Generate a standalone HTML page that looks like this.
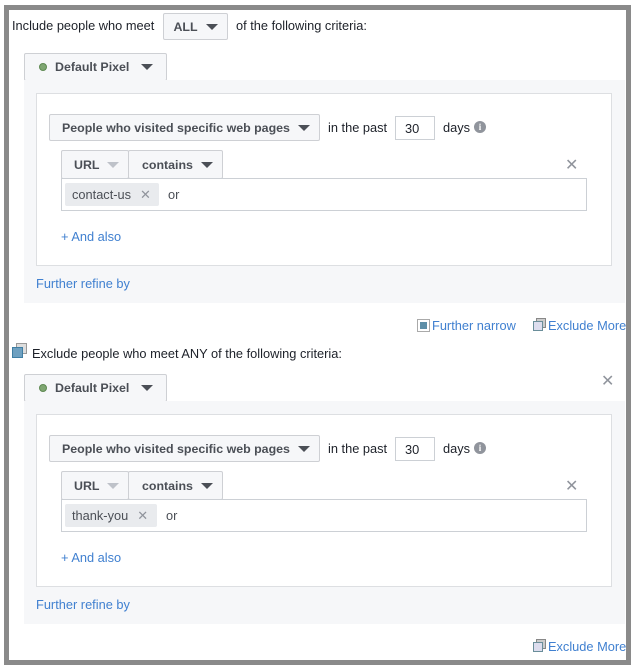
<!DOCTYPE html>
<html><head><meta charset="utf-8"><style>
*{box-sizing:border-box;margin:0;padding:0}
body{width:636px;height:670px;background:#fff;position:relative;overflow:hidden;font-family:"Liberation Sans",Arial,sans-serif;font-size:12.8px;color:#1d2129}
.a{position:absolute}
.frame{left:4px;top:5px;width:627px;height:660px;border:5px solid #8a8a8a;background:#fff}
.btn{position:absolute;background:#f6f7f9;border:1px solid #ced0d4;border-radius:2px;font-weight:bold;color:#4b4f56;display:flex;align-items:center;font-size:12.4px}
.tri{display:inline-block;width:0;height:0;border-left:6px solid transparent;border-right:6px solid transparent;border-top:6px solid #4b4f56;margin-left:8px}
.tri.l{border-top-color:#bec2c9}
.panel{position:absolute;left:24px;width:601px;height:223px;background:#f6f7f9}
.box{position:absolute;left:36px;width:576px;height:173px;background:#fff;border:1px solid #dddfe2}
.t{position:absolute;white-space:nowrap;line-height:14px}
.link{color:#4080d0}
.x{position:absolute;color:#90949c;font-size:16px;line-height:17px}
.in{position:absolute;background:#fff;border:1px solid #ccd0d5}
.tag{position:absolute;background:#e9ebee;border-radius:2px;color:#4b4f56;display:flex;align-items:center;padding-left:7px}
.dot{width:8px;height:8px;border-radius:50%;background:#7fa672;border:1px solid #5e8a52;display:inline-block;margin-right:8px}
.info{position:absolute;width:12px;height:12px;border-radius:50%;background:#90949c;color:#fff;font-size:9px;font-weight:bold;text-align:center;line-height:12px;font-family:"Liberation Serif",serif}
.ic{position:absolute;width:13px;height:13px}
</style></head><body>
<div class="a frame"></div>

<div class="t" style="left:12px;top:19px">Include people who meet</div>
<div class="btn" style="left:163px;top:13px;width:65px;height:27px;justify-content:center">ALL<span class="tri"></span></div>
<div class="t" style="left:236px;top:19px">of the following criteria:</div>

<!-- block 1 -->
<div class="btn" style="left:24px;top:53px;width:143px;height:28px;padding-left:14px"><span class="dot"></span>Default Pixel<span class="tri" style="margin-left:12px"></span></div>
<div class="panel" style="top:80px"></div>
<div class="box" style="top:93px"></div>
<div class="btn" style="left:49px;top:114px;width:271px;height:27px;padding-left:12px">People who visited specific web pages<span class="tri"></span></div>
<div class="t" style="left:328px;top:121px">in the past</div>
<div class="in" style="left:395px;top:116px;width:40px;height:24px;padding:4px 0 0 9px">30</div>
<div class="t" style="left:443px;top:121px">days</div>
<div class="info" style="left:474px;top:121px">i</div>
<div class="btn" style="left:61px;top:150px;width:68px;height:29px;padding-left:12px">URL<span class="tri l"></span></div>
<div class="btn" style="left:128px;top:150px;width:95px;height:29px;padding-left:13px">contains<span class="tri"></span></div>
<div class="x" style="left:565px;top:157px">✕</div>
<div class="in" style="left:61px;top:178px;width:526px;height:33px"></div>
<div class="tag" style="left:65px;top:183px;width:94px;height:23px">contact-us<span style="color:#90949c;margin-left:9px;font-size:13px">✕</span></div>
<div class="t" style="left:168px;top:188px;color:#4b4f56">or</div>
<div class="t link" style="left:61px;top:230px">+ And also</div>
<div class="t link" style="left:36px;top:277px">Further refine by</div>

<div class="ic" style="left:417px;top:319px;border:1px solid #aaa;background:#fff"><div class="a" style="left:2px;top:2px;width:7px;height:7px;background:#5e8fa8"></div></div>
<div class="t link" style="left:432px;top:319px">Further narrow</div>
<div class="ic" style="left:533px;top:318px"><div class="a" style="left:3px;top:0;width:10px;height:10px;border:1px solid #888;background:#ccc"></div><div class="a" style="left:0;top:3px;width:10px;height:10px;border:1px solid #6a8e9a;background:#dde"></div></div>
<div class="t link" style="left:548px;top:319px">Exclude More</div>

<div class="ic" style="left:12px;top:343px;width:15px;height:15px"><div class="a" style="left:4px;top:0;width:11px;height:11px;border:1px solid #999;background:#ddd"></div><div class="a" style="left:0;top:4px;width:11px;height:11px;border:1px solid #3f7ea3;background:#6ea0c0"></div></div>
<div class="t" style="left:32px;top:347px">Exclude people who meet ANY of the following criteria:</div>

<!-- block 2 -->
<div class="btn" style="left:24px;top:374px;width:143px;height:28px;padding-left:14px"><span class="dot"></span>Default Pixel<span class="tri" style="margin-left:12px"></span></div>
<div class="x" style="left:601px;top:373px">✕</div>
<div class="panel" style="top:401px"></div>
<div class="box" style="top:414px"></div>
<div class="btn" style="left:49px;top:435px;width:271px;height:27px;padding-left:12px">People who visited specific web pages<span class="tri"></span></div>
<div class="t" style="left:328px;top:442px">in the past</div>
<div class="in" style="left:395px;top:437px;width:40px;height:24px;padding:4px 0 0 9px">30</div>
<div class="t" style="left:443px;top:442px">days</div>
<div class="info" style="left:474px;top:442px">i</div>
<div class="btn" style="left:61px;top:471px;width:68px;height:29px;padding-left:12px">URL<span class="tri l"></span></div>
<div class="btn" style="left:128px;top:471px;width:95px;height:29px;padding-left:13px">contains<span class="tri"></span></div>
<div class="x" style="left:565px;top:478px">✕</div>
<div class="in" style="left:61px;top:499px;width:526px;height:33px"></div>
<div class="tag" style="left:65px;top:504px;width:92px;height:23px">thank-you<span style="color:#90949c;margin-left:9px;font-size:13px">✕</span></div>
<div class="t" style="left:166px;top:509px;color:#4b4f56">or</div>
<div class="t link" style="left:61px;top:551px">+ And also</div>
<div class="t link" style="left:36px;top:598px">Further refine by</div>

<div class="ic" style="left:533px;top:639px"><div class="a" style="left:3px;top:0;width:10px;height:10px;border:1px solid #888;background:#ccc"></div><div class="a" style="left:0;top:3px;width:10px;height:10px;border:1px solid #6a8e9a;background:#dde"></div></div>
<div class="t link" style="left:548px;top:640px">Exclude More</div>
</body></html>
